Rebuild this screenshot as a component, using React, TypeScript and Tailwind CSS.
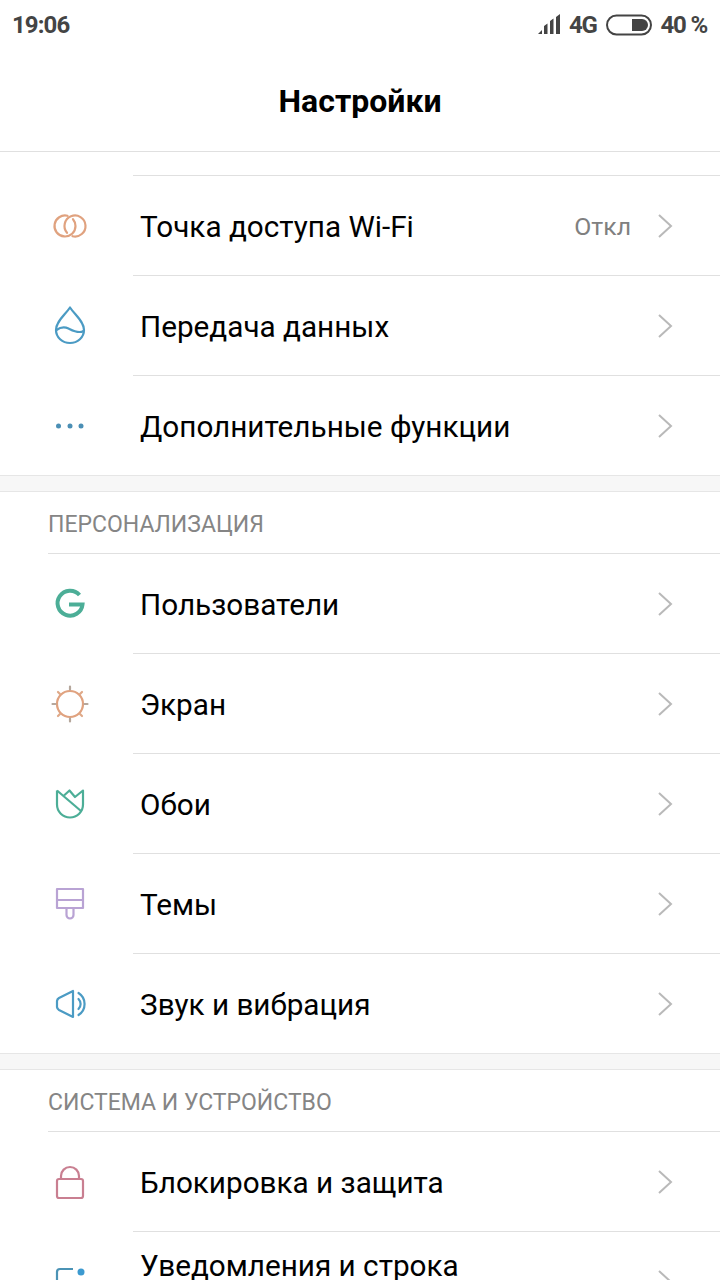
import type { ReactNode } from "react";

const stroke = "fill-none stroke-[2.2]";

const icons: Record<string, ReactNode> = {
  hotspot: (
    <svg width="40" height="40" viewBox="0 0 40 40" className={`${stroke} stroke-[#e0a27f]`} strokeLinecap="round">
      <path d="M17.5 9.8A10.5 10.5 0 1 0 25.500 20 10.500 10.500 0 0 0 23 13.200" />
      <path d="M17 26.800A10.500 10.500 0 1 1 22.500 30.200" />
    </svg>
  ),
  data: (
    <svg width="40" height="40" viewBox="0 0 40 40" className={`${stroke} stroke-[#4b9bc4]`} strokeLinejoin="round">
      <path d="M20 1.500C15 9 6 15.500 6 24a14 13 0 0 0 28 0C34 15.500 25 9 20 1.500Z" />
      <path d="M6.500 24c4-3 8-3.500 12-1.500s10 5.500 15 2.500" />
    </svg>
  ),
  more: (
    <svg width="40" height="40" viewBox="0 0 40 40" className="fill-[#4b8fb5]">
      <circle cx="8.500" cy="20" r="2.500" />
      <circle cx="20" cy="20" r="2.500" />
      <circle cx="31" cy="20" r="2.500" />
    </svg>
  ),
  users: (
    <svg width="40" height="40" viewBox="0 0 40 40" className="fill-none stroke-[#4cae97] stroke-[4]">
      <path d="M29.500 11A12.500 12.500 0 1 0 32.500 20.500H19" />
    </svg>
  ),
  screen: (
    <svg width="40" height="40" viewBox="0 0 40 40" className="fill-none stroke-[2.2]" strokeLinecap="round">
      <circle cx="20" cy="20" r="13" className="stroke-[#e0a27f]" />
      <path d="M20 2.500v3M20 34.500v3M2.500 20h3M34.500 20h3" className="stroke-[#b5a79c]" />
      <path d="M8 8l2 2M32 8l-2 2M8 32l2-2M32 32l-2-2" className="stroke-[#dfa988]" />
    </svg>
  ),
  wallpaper: (
    <svg width="40" height="40" viewBox="0 0 40 40" className={`${stroke} stroke-[#4cae97]`} strokeLinejoin="round">
      <path d="M7 6.500v14a13 13 0 0 0 26 0V6.500l-8 6.500-5.500-6.500-5.500 5" />
      <path d="M7 6.500l24 20.500" />
    </svg>
  ),
  themes: (
    <svg width="40" height="40" viewBox="0 0 40 40" className={`${stroke} stroke-[#b9a3d4]`} strokeLinejoin="round">
      <path d="M7 5h26v19H7zM7 16h26" />
      <path d="M16.500 24v7a3.500 3.500 0 0 0 7 0v-7" />
    </svg>
  ),
  sound: (
    <svg width="40" height="40" viewBox="0 0 40 40" className={`${stroke} stroke-[#4b9bc4]`} strokeLinejoin="round" strokeLinecap="round">
      <path d="M23 7v26L9 26a4 4 0 0 1-2-3v-6a4 4 0 0 1 2-3Z" />
      <path d="M28.500 15a7 7 0 0 1 0 10" />
      <path d="M28.500 9a13 13 0 0 1 0 22" />
    </svg>
  ),
  lock: (
    <svg width="40" height="40" viewBox="0 0 40 40" className={`${stroke} stroke-[#c97f91]`} strokeLinejoin="round">
      <rect x="7" y="17" width="26" height="19" rx="2" />
      <path d="M11 17v-3a9 9 0 0 1 18 0v3" />
    </svg>
  ),
  notifications: (
    <svg width="40" height="40" viewBox="0 0 40 40" className={`${stroke} stroke-[#4b93b5]`}>
      <path d="M7 40V10a3 3 0 0 1 3-3h13" />
      <circle cx="31" cy="10" r="3.500" className="fill-[#3c9ad0] stroke-none" />
    </svg>
  ),
};

function Chevron() {
  return (
    <svg width="16" height="26" viewBox="0 0 16 26" className="fill-none stroke-[#b9b9b9] stroke-2">
      <path d="M2 2l12 11L2 24" />
    </svg>
  );
}

function Row({ icon, title, value, last }: { icon: string; title: string; value?: string; last?: boolean }) {
  return (
    <div className={`flex items-stretch ${last ? "h-[99px]" : "h-[100px]"}`}>
      <div className="flex w-[133px] shrink-0 items-center pl-[50px]">{icons[icon]}</div>
      <div className={`flex min-w-0 flex-1 items-center pl-[7px] pr-[47px] ${last ? "" : "border-b border-[#e0e0e0]"}`}>
        <span className="flex-1 pr-[60px] pt-[2px] text-[29.7px] leading-[34px] text-black">{title}</span>
        {value && <span className="mr-[26px] pt-[2px] text-[24.8px] text-[#808080]">{value}</span>}
        <Chevron />
      </div>
    </div>
  );
}

function SectionTitle({ children }: { children: string }) {
  return (
    <div className="ml-[48px] flex h-[62px] items-center border-b border-[#e0e0e0] pt-[5px] text-[23px] text-[#858585]">
      {children}
    </div>
  );
}

function Band() {
  return <div className="h-[17px] border-y border-[#e6e6e6] bg-[#f7f7f7]" />;
}

export default function App() {
  return (
    <div className="h-[1280px] w-[720px] overflow-hidden bg-white font-['Roboto',sans-serif]">
      <div className="flex h-[52px] items-center justify-between pb-[2px] pl-[12px] pr-[13px] font-bold text-[#444444]">
        <span className="text-[24px] tracking-[-0.9px]">19:06</span>
        <div className="flex items-center gap-[9px] text-[24px]">
          <svg width="22" height="20" viewBox="0 0 22 20" className="mb-[3px] fill-[#444444]">
            <path d="M0 20l4-4v4zM6 12l3.500-2.500V20H6zM12 7l3.500-2.500V20H12zM18 3l4-3v20h-4z" />
          </svg>
          <span className="tracking-[-1.3px]">4G</span>
          <svg width="46" height="22" viewBox="0 0 46 22">
            <rect x="1" y="1.500" width="44" height="19" rx="9.500" className="fill-none stroke-[#444444] stroke-2" />
            <path d="M26 5h10a6 6 0 0 1 0 12H26z" className="fill-[#444444]" />
          </svg>
          <span className="tracking-[-1.2px]">40 %</span>
        </div>
      </div>
      <div className="flex h-[100px] items-center justify-center border-b border-[#e0e0e0] pb-[2px] text-[32px] font-bold text-black">
        Настройки
      </div>
      <div className="ml-[133px] h-[24px] border-b border-[#e0e0e0]" />
      <Row icon="hotspot" title="Точка доступа Wi-Fi" value="Откл" />
      <Row icon="data" title="Передача данных" />
      <Row icon="more" title="Дополнительные функции" last />
      <Band />
      <SectionTitle>ПЕРСОНАЛИЗАЦИЯ</SectionTitle>
      <Row icon="users" title="Пользователи" />
      <Row icon="screen" title="Экран" />
      <Row icon="wallpaper" title="Обои" />
      <Row icon="themes" title="Темы" />
      <Row icon="sound" title="Звук и вибрация" last />
      <Band />
      <SectionTitle>СИСТЕМА И УСТРОЙСТВО</SectionTitle>
      <Row icon="lock" title="Блокировка и защита" />
      <Row icon="notifications" title="Уведомления и строка состояния" last />
    </div>
  );
}
